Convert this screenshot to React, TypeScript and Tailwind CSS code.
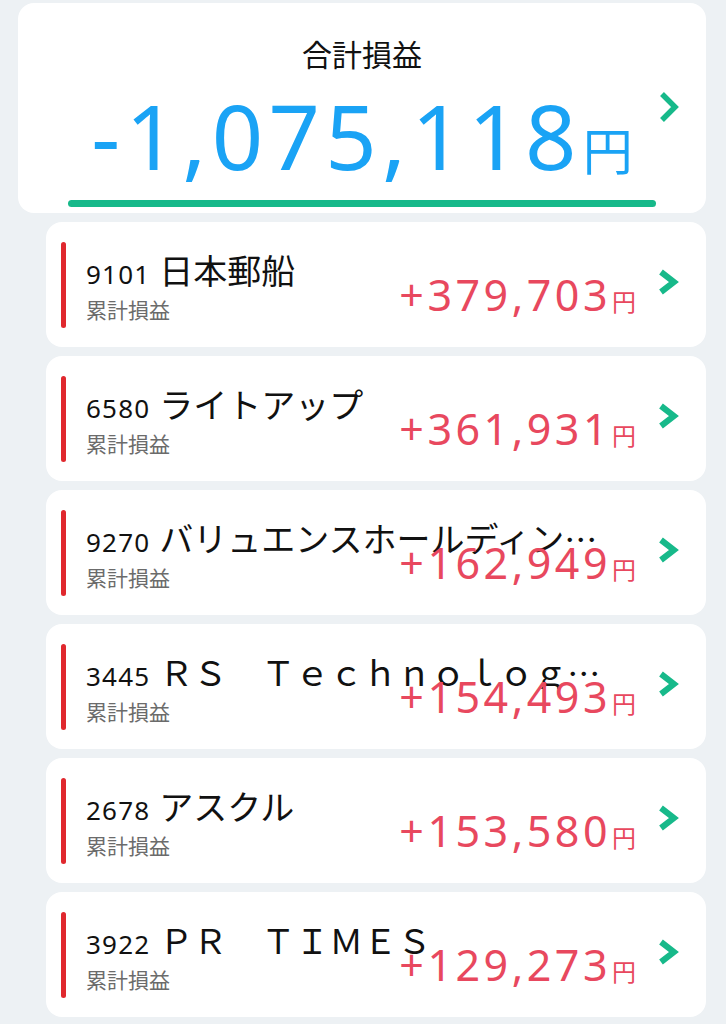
import React from "react";

const FONT = { fontFamily: '"Noto Sans", "Noto Sans CJK JP", sans-serif' };
const CJK = { fontFamily: '"Noto Sans CJK JP", "Noto Sans", sans-serif' };

function Chevron({ className }: { className?: string }) {
  return (
    <svg viewBox="0 0 24 26" className={className} fill="none">
      <polyline
        points="5,3 18,13 5,23"
        stroke="#17b98a"
        strokeWidth="6"
        strokeLinejoin="miter"
        strokeLinecap="butt"
      />
    </svg>
  );
}

function BigChevron({ className }: { className?: string }) {
  return (
    <svg viewBox="0 0 24 34" className={className} fill="none">
      <polyline
        points="5,4 18,17 5,30"
        stroke="#17b98a"
        strokeWidth="5.5"
        strokeLinejoin="miter"
        strokeLinecap="butt"
      />
    </svg>
  );
}

const items = [
  { code: "9101", name: "日本郵船", amount: "+379,703" },
  { code: "6580", name: "ライトアップ", amount: "+361,931" },
  { code: "9270", name: "バリュエンスホールディングス", amount: "+162,949" },
  { code: "3445", name: "ＲＳ　Ｔｅｃｈｎｏｌｏｇｉｅｓ", amount: "+154,493" },
  { code: "2678", name: "アスクル", amount: "+153,580" },
  { code: "3922", name: "ＰＲ　ＴＩＭＥＳ", amount: "+129,273" },
];

export default function App() {
  return (
    <div className="w-[726px] h-[1024px] bg-[#edf1f4] overflow-hidden pt-[3px]" style={FONT}>
      <div className="ml-[18px] mr-[20px] bg-white rounded-[16px] flex flex-col items-center pt-[33px] pb-[6px]">
        <div className="text-[30px] leading-[38px] text-[#111]">合計損益</div>
        <div className="w-full grid grid-cols-[1fr_auto_1fr] mt-[16px]">
          <div />
          <div className="flex items-baseline text-[#1aa3f5]">
            <span className="text-[90px] leading-none tracking-[5.3px]">-1,075,118</span>
            <span className="text-[50px] leading-none ml-[1px]">円</span>
          </div>
          <div className="flex justify-end items-start pr-[25px]">
            <BigChevron className="w-[24px] h-[34px]" />
          </div>
        </div>
        <div className="w-[588px] h-[7px] rounded-full bg-[#17b98a] mt-[20px]" />
      </div>

      <div className="ml-[46px] mr-[20px] mt-[9px] flex flex-col gap-[9px]">
        {items.map((it) => (
          <div key={it.code} className="h-[125px] bg-white rounded-[16px] flex items-center pl-[15px] pr-[26px]">
            <div className="w-[5px] h-[86px] rounded-full bg-[#e0282e] shrink-0" />
            <div className="flex-1 min-w-0 ml-[20px] flex flex-col">
              <div className="h-[34px] leading-[34px] pr-[24px] truncate text-[#111] text-[33px]" style={CJK}>
                <span className="text-[26px] tracking-[1.2px] mr-[9px]" style={FONT}>{it.code}</span>
                <span className="text-[34px]">{it.name}</span>
              </div>
              <div className="flex items-end justify-between -mt-[14px]">
                <span className="text-[21px] leading-[26px] text-[#6b6b6b] -mb-[7px]">累計損益</span>
                <span className="flex items-baseline text-[#e8485e]">
                  <span className="text-[43px] leading-none tracking-[3.5px]">{it.amount}</span>
                  <span className="text-[24px] leading-none ml-[1px]">円</span>
                </span>
              </div>
            </div>
            <Chevron className="w-[24px] h-[26px] ml-[20px] shrink-0 -mt-[6px]" />
          </div>
        ))}
      </div>
    </div>
  );
}
